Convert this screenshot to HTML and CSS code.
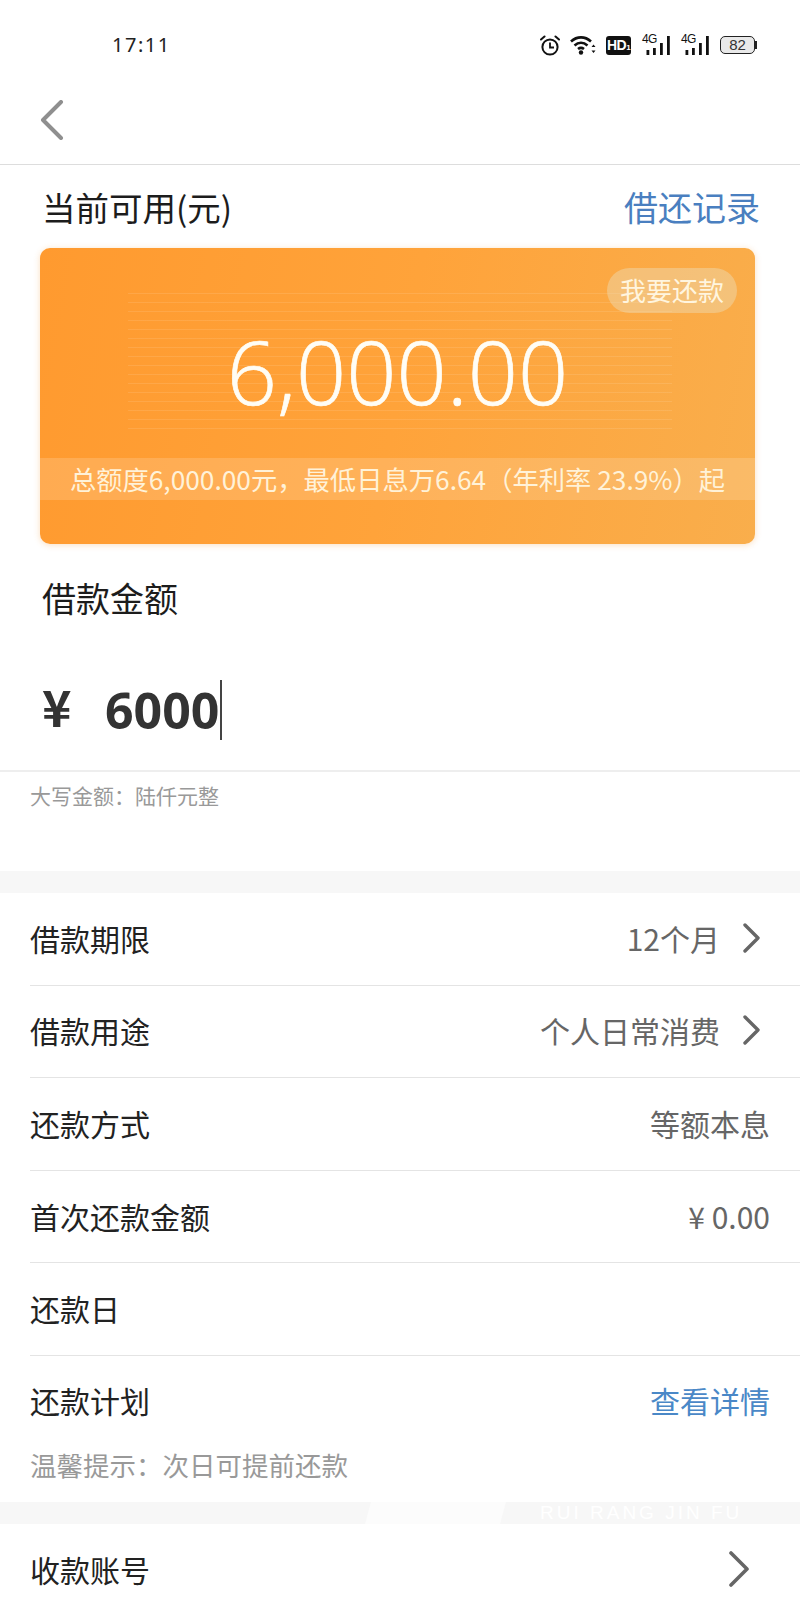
FILE: index.html
```html
<!DOCTYPE html>
<html lang="zh-CN">
<head>
    <meta charset="UTF-8">
    <meta name="viewport" content="width=device-width, initial-scale=1.0">
    <title>借款</title>
    <link rel="stylesheet" href="styles.css">
</head>
<body>
    <div class="page">
        <div class="status">
            <span class="time">17:11</span>
            <div class="status-icons">
                <svg class="ic-alarm" width="20" height="21" viewBox="0 0 20 21" fill="none" stroke="#111" stroke-width="2">
                    <circle cx="10" cy="12" r="7.6"/>
                    <path d="M10 7.5V12.5H14" stroke-width="1.8"/>
                    <path d="M1 4.5L4.5 1.5M19 4.5L15.5 1.5" stroke-linecap="round"/>
                </svg>
                <svg class="ic-wifi" width="26" height="20" viewBox="0 0 26 20" fill="none" stroke="#111" stroke-width="2.6">
                    <path d="M1 6.5C7 1 15 1 21 6.5"/>
                    <path d="M4.5 10.5C8.5 7 13.5 7 17.5 10.5"/>
                    <path d="M8 14C9.8 12.6 12.2 12.6 14 14"/>
                    <circle cx="11" cy="17.5" r="2.2" fill="#111" stroke="none"/>
                    <path d="M23.5 9.5L25.5 12H21.5ZM23.5 18L25.5 15.5H21.5Z" fill="#111" stroke="none"/>
                </svg>
                <span class="hd">HD<small>1</small></span>
                <div class="signal"><span class="g">4G</span><svg width="29" height="20" viewBox="0 0 29 20" fill="#111"><rect x="4.5" y="15" width="2.8" height="5"/><rect x="11" y="13" width="2.8" height="7"/><rect x="18" y="8" width="2.8" height="12"/><rect x="25" y="1" width="2.8" height="19"/></svg></div>
                <div class="signal"><span class="g">4G</span><svg width="29" height="20" viewBox="0 0 29 20" fill="#111"><rect x="4.5" y="15" width="2.8" height="5"/><rect x="11" y="13" width="2.8" height="7"/><rect x="18" y="8" width="2.8" height="12"/><rect x="25" y="1" width="2.8" height="19"/></svg></div>
                <div class="battery"><span class="batt-body">82</span><span class="batt-tip"></span></div>
            </div>
        </div>

        <div class="nav">
            <svg width="24" height="40" viewBox="0 0 24 40" fill="none" stroke="#8f8f8f" stroke-width="4" stroke-linecap="round" stroke-linejoin="round">
                <path d="M21 2L3 20L21 38"/>
            </svg>
        </div>

        <div class="head-row">
            <span>当前可用(元)</span>
            <a class="blue">借还记录</a>
        </div>

        <div class="card">
            <div class="card-lines"></div>
            <div class="pill-row"><span class="pill">我要还款</span></div>
            <div class="amount">6,000.00</div>
            <div class="strip">总额度6,000.00元，最低日息万6.64（年利率 23.9%）起</div>
        </div>

        <div class="loan-label">借款金额</div>
        <div class="loan-input">
            <span class="yen">¥</span>
            <span class="loan-num">6000</span>
            <span class="caret"></span>
        </div>
        <div class="upper">大写金额：陆仟元整</div>

        <div class="band"></div>

        <div class="list">
            <div class="row"><span>借款期限</span><div class="val">12个月<svg class="chev" width="18" height="30" viewBox="0 0 18 30" fill="none" stroke="#666" stroke-width="3.4" stroke-linecap="round" stroke-linejoin="round"><path d="M2 2L15 15L2 28"/></svg></div></div>
            <div class="row"><span>借款用途</span><div class="val">个人日常消费<svg class="chev" width="18" height="30" viewBox="0 0 18 30" fill="none" stroke="#666" stroke-width="3.4" stroke-linecap="round" stroke-linejoin="round"><path d="M2 2L15 15L2 28"/></svg></div></div>
            <div class="row"><span>还款方式</span><div class="val">等额本息</div></div>
            <div class="row"><span>首次还款金额</span><div class="val">¥ 0.00</div></div>
            <div class="row"><span>还款日</span></div>
            <div class="row row-plain"><span>还款计划</span><a class="blue-sm">查看详情</a></div>
        </div>
        <div class="tip">温馨提示：次日可提前还款</div>

        <div class="band band-mark"><span class="mark-shape"></span><span class="mark">RUI RANG JIN FU</span></div>

        <div class="row row-last"><span>收款账号</span><svg width="22" height="36" viewBox="0 0 22 36" fill="none" stroke="#666" stroke-width="3.6" stroke-linecap="round" stroke-linejoin="round"><path d="M3 2L19 18L3 34"/></svg></div>
    </div>
</body>
</html>
```

FILE: styles.css
```css
* {
    box-sizing: border-box;
}
body {
    margin: 0;
    background: #fff;
    font-family: "Noto Sans CJK SC", "Noto Sans", sans-serif;
    color: #222;
}
.page {
    width: 800px;
    height: 1599px;
    overflow: hidden;
}
.status {
    height: 90px;
    display: flex;
    align-items: flex-start;
    justify-content: space-between;
    padding: 33px 43px 0 112px;
}
.time {
    font-family: "Noto Sans", sans-serif;
    font-size: 20px;
    line-height: 24px;
    letter-spacing: 1.5px;
    color: #222;
}
.status-icons {
    display: flex;
    align-items: center;
    height: 24px;
}
.ic-alarm {
    margin-right: 10px;
}
.ic-wifi {
    margin-right: 10px;
}
.hd {
    width: 25px;
    height: 19px;
    background: #111;
    color: #fff;
    border-radius: 3px;
    font-family: "Liberation Sans", sans-serif;
    font-weight: bold;
    font-size: 14px;
    line-height: 19px;
    letter-spacing: -0.5px;
    text-align: center;
    margin-right: 11px;
}
.hd small {
    font-size: 8px;
}
.signal {
    position: relative;
    width: 29px;
    height: 20px;
    margin-right: 10px;
}
.signal .g {
    position: absolute;
    left: 0;
    top: -2px;
    font-family: "Liberation Sans", sans-serif;
    font-size: 12px;
    line-height: 13px;
    letter-spacing: -0.6px;
    color: #111;
}
.signal svg {
    display: block;
}
.battery {
    display: flex;
    align-items: center;
}
.batt-body {
    width: 35px;
    height: 18px;
    border: 1.6px solid #222;
    border-radius: 5px;
    background: #e9e9e9;
    font-family: "Liberation Sans", sans-serif;
    font-size: 15px;
    line-height: 15px;
    text-align: center;
    color: #333;
}
.batt-tip {
    width: 2px;
    height: 8px;
    background: #222;
}
.nav {
    height: 75px;
    padding: 10px 0 0 40px;
    border-bottom: 1px solid #ddd;
}
.nav svg {
    display: block;
}
.head-row {
    display: flex;
    justify-content: space-between;
    align-items: center;
    height: 83px;
    padding: 0 40px 0 42px;
    font-size: 33.5px;
    line-height: 48px;
    color: #1c1c1c;
}
.blue {
    color: #4a7fc0;
    font-size: 34px;
}
.card {
    position: relative;
    width: 715px;
    height: 296px;
    margin-left: 40px;
    border-radius: 10px;
    background: linear-gradient(100deg, #ff9a2f 0%, #ffa33a 50%, #f9ae4c 100%);
    box-shadow: 0 1px 6px rgba(240, 150, 50, 0.3);
    color: #fff;
}
.card-lines {
    position: absolute;
    left: 88px;
    right: 83px;
    top: 45px;
    height: 143px;
    background: repeating-linear-gradient(180deg, rgba(255, 255, 255, 0.1) 0, rgba(255, 255, 255, 0.1) 1px, transparent 1px, transparent 9px);
}
.pill-row {
    display: flex;
    justify-content: flex-end;
    padding: 20px 18px 0 0;
}
.pill {
    position: relative;
    width: 130px;
    height: 45px;
    border-radius: 23px;
    background: rgba(235, 225, 190, 0.42);
    color: #fff5df;
    font-size: 26px;
    line-height: 44px;
    text-align: center;
}
.amount {
    position: relative;
    margin-top: 3px;
    font-family: "Open Sans", sans-serif;
    font-weight: 300;
    font-size: 88px;
    line-height: 110px;
    text-align: center;
    color: #fffdf5;
    -webkit-text-stroke: 0.7px #fffdf5;
}
.strip {
    position: relative;
    margin-top: 32px;
    height: 42px;
    background: rgba(255, 255, 255, 0.16);
    color: #fff2d8;
    font-size: 26.3px;
    line-height: 42px;
    text-align: center;
    white-space: nowrap;
}
.loan-label {
    margin-top: 30px;
    padding-left: 42px;
    font-size: 34px;
    line-height: 48px;
    color: #1c1c1c;
}
.loan-input {
    display: flex;
    align-items: center;
    height: 70px;
    margin-top: 53px;
    padding-left: 42px;
    color: #333;
}
.yen {
    width: 63px;
    font-size: 50px;
    font-weight: bold;
    line-height: 60px;
    margin-bottom: 10px;
}
.loan-num {
    font-family: "Open Sans", sans-serif;
    font-size: 50px;
    font-weight: bold;
    line-height: 60px;
}
.caret {
    width: 1.5px;
    height: 60px;
    background: #444;
    margin-left: 1px;
}
.upper {
    margin-top: 25px;
    border-top: 2px solid #eee;
    padding: 8px 0 0 30px;
    height: 101px;
    font-size: 21px;
    line-height: 30px;
    color: #999;
}
.band {
    height: 22px;
    background: #f7f7f7;
}
.list {
    padding-left: 30px;
}
.row {
    display: flex;
    justify-content: space-between;
    align-items: center;
    height: 92.6px;
    border-bottom: 1px solid #e4e4e4;
    padding-right: 30px;
    padding-bottom: 2px;
    font-size: 30px;
    color: #222;
}
.val {
    display: flex;
    align-items: center;
    color: #666;
}
.chev {
    margin: 0 9px 0 23px;
}
.row-plain {
    border-bottom: none;
    height: 90px;
}
.blue-sm {
    color: #4a88c7;
}
.tip {
    height: 56px;
    padding-left: 30px;
    font-size: 26.5px;
    line-height: 38px;
    color: #999;
}
.band-mark {
    display: flex;
    overflow: hidden;
    padding-left: 368px;
}
.mark-shape {
    width: 135px;
    height: 22px;
    background: #fcfcfc;
    transform: skewX(-15deg);
}
.mark {
    margin-left: 37px;
    font-family: "Liberation Sans", sans-serif;
    font-size: 19px;
    line-height: 22px;
    letter-spacing: 3px;
    white-space: nowrap;
    color: #fff;
}
.row-last {
    height: 76px;
    padding: 14px 50px 0 30px;
    border-bottom: none;
}
```
